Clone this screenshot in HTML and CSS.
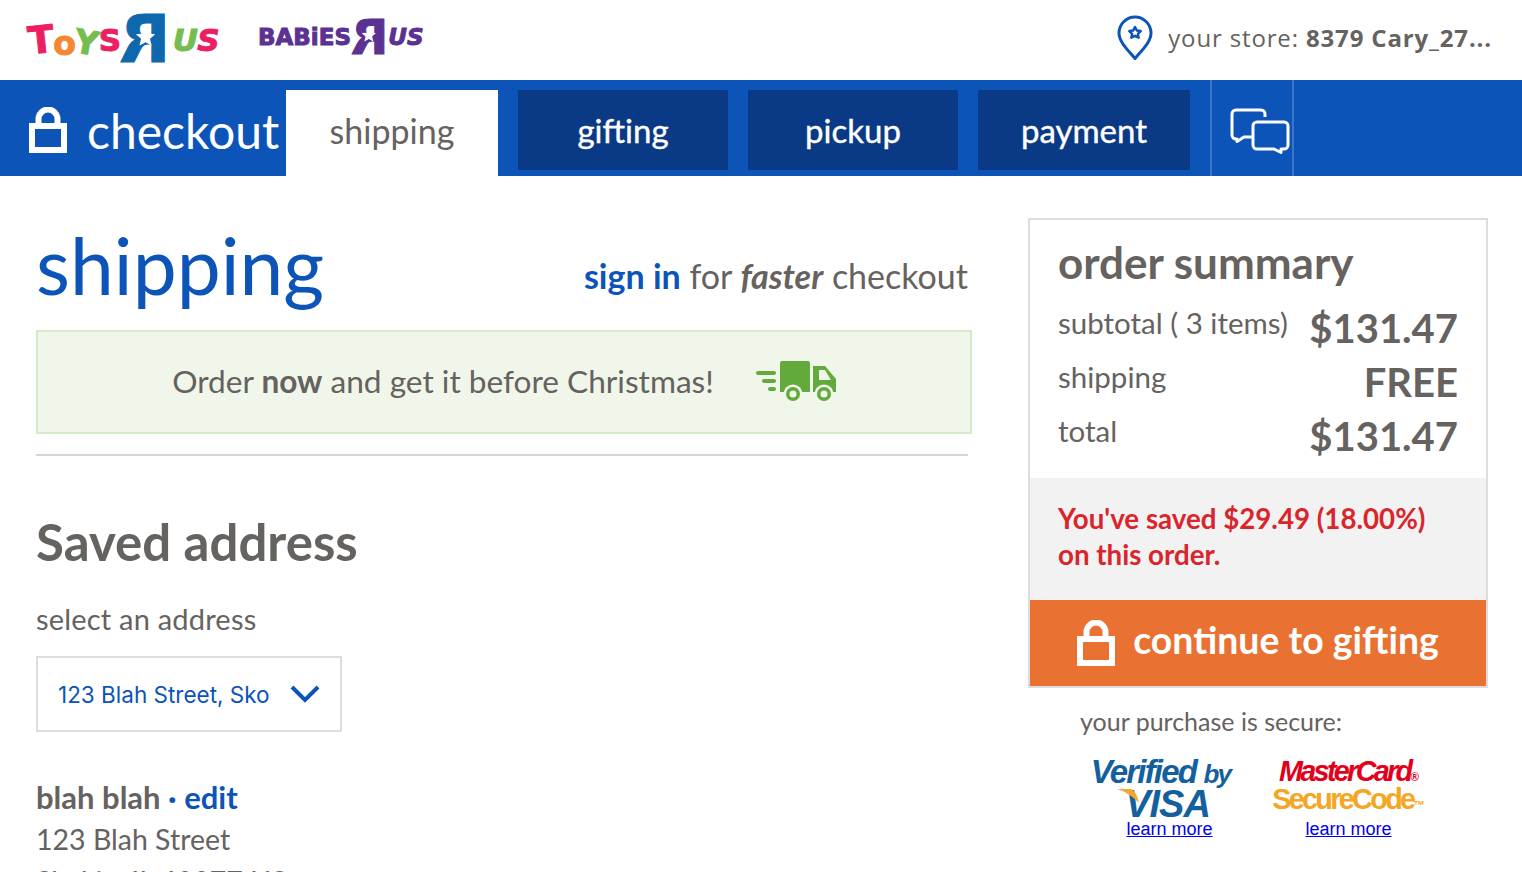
FILE: index.html
```html
<!DOCTYPE html>
<html>
<head>
  <title>Checkout - Toys R Us</title>
  <link rel="stylesheet" href="styles.css">
</head>
<body>
  <header class="topbar">
    <div class="logo logo-toys">
      <span class="l-pink l-t">T</span><span class="l-orange l-o">o</span><span class="l-green l-y">Y</span><span class="l-pink l-s">S</span><span class="big-r"><span class="big-r-letter">R</span><svg class="big-r-star" viewBox="0 0 24 24"><path d="M12 1l3.200 7.200 7.800.7-5.900 5.200 1.800 7.700L12 18l-6.900 3.800 1.800-7.700L1 8.900l7.800-.7z" fill="#fff"/></svg></span><span class="l-green l-italic l-u">U</span><span class="l-pink l-italic l-s">S</span>
    </div>
    <div class="logo logo-babies">
      BABiES<span class="big-r"><span class="big-r-letter">R</span><svg class="big-r-star" viewBox="0 0 24 24"><path d="M12 1l3.200 7.200 7.800.7-5.900 5.200 1.800 7.700L12 18l-6.900 3.800 1.800-7.700L1 8.900l7.800-.7z" fill="#fff"/></svg></span><span class="l-italic">US</span>
    </div>
    <div class="store">
      <svg class="store-pin" width="36" height="46" viewBox="0 0 36 46">
        <path d="M18 43.500C11 35 2 27 2 18a16 16 0 0 1 32 0c0 9-9 17-16 25.500z" fill="none" stroke="#0c54b8" stroke-width="3" stroke-linejoin="round"/>
        <path d="M18 12l1.800 3.500 3.900.6-2.800 2.700.7 3.900-3.600-1.900-3.600 1.900.7-3.900-2.800-2.700 3.900-.6z" fill="none" stroke="#0c54b8" stroke-width="2.500" stroke-linejoin="round"/>
      </svg>
      <span class="store-text">your store: <b>8379 Cary_27...</b></span>
    </div>
  </header>

  <nav class="navbar">
    <div class="nav-title">
      <svg class="lock" width="38" height="46" viewBox="0 0 38 46">
        <path d="M9.500 19V12a9.500 9.500 0 0 1 19 0v7" fill="none" stroke="#fff" stroke-width="6"/>
        <rect x="3" y="19" width="32" height="24" fill="none" stroke="#fff" stroke-width="6"/>
      </svg>
      <span>checkout</span>
    </div>
    <a class="tab tab-active">shipping</a>
    <a class="tab">gifting</a>
    <a class="tab">pickup</a>
    <a class="tab tab-last">payment</a>
    <div class="chat">
      <svg width="60" height="48" viewBox="0 0 60 48">
        <path d="M35 10V7a4 4 0 0 0-4-4H6a4 4 0 0 0-4 4v21a4 4 0 0 0 4 4h1v2.500L14 30h8" fill="none" stroke="#fff" stroke-width="3" stroke-linejoin="round"/>
        <path d="M27 15h27a4 4 0 0 1 4 4v19a4 4 0 0 1-4 4h-3v3.500L44 42H27a4 4 0 0 1-4-4V19a4 4 0 0 1 4-4z" fill="none" stroke="#fff" stroke-width="3" stroke-linejoin="round"/>
      </svg>
    </div>
  </nav>

  <main class="page">
    <section class="left">
      <div class="title-row">
        <h1>shipping</h1>
        <p class="signin"><a>sign in</a> for <b><i>faster</i></b> checkout</p>
      </div>
      <div class="banner">
        <span>Order <b>now</b> and get it before Christmas!</span>
        <svg width="80" height="42" viewBox="0 0 80 42">
          <g fill="#63aa3d">
            <rect y="10" width="20" height="4" rx="2"/>
            <rect x="6" y="18" width="14" height="4" rx="2"/>
            <rect x="12" y="26" width="8" height="4" rx="2"/>
            <path d="M26 0h26a2 2 0 0 1 2 2v29H24V2a2 2 0 0 1 2-2z"/>
            <path d="M57 5h12l11 13v13H57z"/>
          </g>
          <circle cx="37" cy="33" r="9.500" fill="#f0f7ea"/>
          <circle cx="68" cy="33" r="9.500" fill="#f0f7ea"/>
          <circle cx="37" cy="33" r="7" fill="#63aa3d"/>
          <circle cx="68" cy="33" r="7" fill="#63aa3d"/>
          <circle cx="37" cy="33" r="3.500" fill="#f0f7ea"/>
          <circle cx="68" cy="33" r="3.500" fill="#f0f7ea"/>
          <path d="M63 9h6l6 10H63z" fill="#f0f7ea"/>
        </svg>
      </div>
      <hr class="rule">
      <h2>Saved address</h2>
      <p class="field-label">select an address</p>
      <div class="select">
        <span class="select-value">123 Blah Street, Skokie</span>
        <svg width="30" height="20" viewBox="0 0 30 20"><path d="M2 3l13 13L28 3" fill="none" stroke="#0c54b8" stroke-width="4"/></svg>
      </div>
      <p class="addr-name">blah blah <span class="dot">·</span> <a>edit</a></p>
      <p class="addr-line">123 Blah Street</p>
      <p class="addr-line">Skokie, IL 60077 US</p>
    </section>

    <aside class="right">
      <div class="summary">
        <div class="summary-body">
          <h3>order summary</h3>
          <div class="sum-row"><span>subtotal ( 3 items)</span><b>$131.47</b></div>
          <div class="sum-row"><span>shipping</span><b>FREE</b></div>
          <div class="sum-row"><span>total</span><b>$131.47</b></div>
        </div>
        <div class="saved">You've saved $29.49 (18.00%)<br>on this order.</div>
        <a class="continue">
          <svg class="lock" width="38" height="46" viewBox="0 0 38 46">
            <path d="M9.500 19V12a9.500 9.500 0 0 1 19 0v7" fill="none" stroke="#fff" stroke-width="6"/>
            <rect x="3" y="19" width="32" height="24" fill="none" stroke="#fff" stroke-width="6"/>
          </svg>
          <span>continue to gifting</span>
        </a>
      </div>
      <p class="secure">your purchase is secure:</p>
      <div class="badges">
        <div class="badge badge-visa">
          <div class="visa-top">Verified <small>by</small></div>
          <div class="visa-word"><svg class="visa-swoosh" width="22" height="14" viewBox="0 0 22 14"><path d="M0 0h14c4 2 6 6 8 14C16 8 10 3 0 0z" fill="#f3a82c"/></svg>VISA</div>
          <a class="learn">learn more</a>
        </div>
        <div class="badge badge-mc">
          <div class="mc-top">MasterCard<sup>®</sup></div>
          <div class="mc-bottom">SecureCode<sup>™</sup></div>
          <a class="learn">learn more</a>
        </div>
      </div>
    </aside>
  </main>
</body>
</html>
```

FILE: styles.css
```css
html, body {
  height: 872px;
  overflow: hidden;
}

body {
  margin: 0;
  background: #fff;
  color: #65625f;
  font-family: "Lato", "Open Sans", sans-serif;
}

p, h1, h2, h3 {
  margin: 0;
  font-weight: normal;
}

/* top bar */
.topbar {
  display: flex;
  align-items: center;
  height: 80px;
  padding: 0 30px 5px 28px;
  box-sizing: border-box;
}

.logo {
  display: flex;
  align-items: center;
  font-family: "DejaVu Sans", sans-serif;
  font-weight: 700;
  white-space: nowrap;
  -webkit-text-stroke: 1px currentColor;
}

.logo-toys {
  width: 230px;
  margin-top: 5px;
  font-size: 33px;
  letter-spacing: -0.6px;
}

.logo-babies {
  color: #5b3192;
  font-size: 23px;
  letter-spacing: 0;
}

.l-pink { color: #ec1f63; }
.l-orange { color: #f58632; }
.l-green { color: #75bd4f; }
.l-italic { font-style: italic; }

.l-t { display: inline-block; font-size: 38px; transform: rotate(-6deg); }
.l-o { display: inline-block; transform: translateY(3px); }
.l-y { display: inline-block; transform: rotate(10deg) translateY(2px); }
.l-s { display: inline-block; font-size: 31px; }
.l-u { display: inline-block; font-size: 31px; margin-left: 2px; }

.big-r {
  position: relative;
  display: inline-block;
  line-height: 1;
  color: #0d68ae;
}

.big-r-letter {
  display: inline-block;
  transform: scaleX(-1);
  font-size: 2em;
}

.logo-babies .big-r {
  color: #5b3192;
}

.logo-babies .big-r-letter {
  font-size: 2.100em;
}

.big-r-star {
  position: absolute;
  top: 24%;
  left: 28%;
  width: 42%;
  height: 42%;
}

.store {
  display: flex;
  align-items: center;
  margin-left: auto;
}

.store-pin {
  margin-right: 15px;
}

.store-text {
  font-family: "Open Sans", sans-serif;
  font-size: 24px;
  letter-spacing: 0.85px;
}

/* blue nav */
.navbar {
  display: flex;
  height: 96px;
  background: #0c54b8;
}

.nav-title {
  display: flex;
  align-items: center;
  width: 286px;
  box-sizing: border-box;
  padding: 4px 0 0 29px;
  gap: 20px;
  color: #fff;
  font-size: 48px;
  white-space: nowrap;
}

.tab {
  display: flex;
  align-items: center;
  justify-content: center;
  width: 210px;
  height: 80px;
  margin: 10px 20px 0 0;
  background: #0a3a85;
  color: #fff;
  font-size: 33px;
  -webkit-text-stroke: 0.4px currentColor;
}

.tab-active {
  width: 212px;
  height: 80px;
  padding-bottom: 6px;
  background: #fff;
  color: #65625f;
  font-size: 34px;
  -webkit-text-stroke: 0;
}

.tab-last {
  width: 212px;
}

.chat {
  display: flex;
  align-items: center;
  width: 84px;
  height: 96px;
  padding: 6px 0 0 18px;
  box-sizing: border-box;
  border-left: 2px solid #3d76c6;
  border-right: 2px solid #3d76c6;
}

/* page */
.page {
  display: flex;
  align-items: flex-start;
  padding: 42px 34px 0 36px;
}

.left {
  width: 936px;
}

.title-row {
  display: flex;
  justify-content: space-between;
  align-items: flex-start;
  height: 112px;
  padding-right: 4px;
}

h1 {
  color: #0c54b8;
  font-size: 78.500px;
  line-height: 94px;
}

.signin {
  margin-top: 38px;
  font-size: 34px;
  line-height: 40px;
}

.signin a {
  color: #0c54b8;
  font-weight: 700;
}

.banner {
  display: flex;
  align-items: center;
  justify-content: center;
  gap: 42px;
  height: 104px;
  box-sizing: border-box;
  background: #f0f7ea;
  border: 2px solid #d6e9c8;
  font-size: 31.600px;
}

.banner span {
  margin-top: -3px;
}

.rule {
  width: 932px;
  margin: 20px 0 0;
  border: 0;
  border-top: 2px solid #d5d5d5;
}

h2 {
  margin-top: 56px;
  font-size: 51px;
  font-weight: 700;
  line-height: 60px;
}

.field-label {
  margin-top: 29px;
  font-size: 29px;
  letter-spacing: 0.2px;
  line-height: 36px;
}

.select {
  display: flex;
  align-items: center;
  width: 306px;
  height: 76px;
  margin-top: 19px;
  padding: 0 20px;
  box-sizing: border-box;
  border: 2px solid #ddd;
  color: #0c54b8;
  font-family: "Inter", sans-serif;
  font-size: 22.500px;
}

.select-value {
  width: 212px;
  margin-right: 20px;
  overflow: hidden;
  white-space: nowrap;
}

.addr-name {
  margin-top: 45px;
  font-size: 31px;
  font-weight: 700;
  line-height: 40px;
}

.addr-name a, .dot {
  color: #0c54b8;
}

.addr-line {
  margin-top: 2px;
  font-size: 28.500px;
  line-height: 40px;
}

/* order summary */
.right {
  width: 460px;
  margin-left: 56px;
}

.summary {
  border: 2px solid #ddd;
}

.summary-body {
  height: 258px;
  padding: 16px 28px 0;
  box-sizing: border-box;
}

h3 {
  font-size: 44px;
  font-weight: 700;
  line-height: 52px;
  margin-bottom: 13px;
}

.sum-row {
  display: flex;
  justify-content: space-between;
  align-items: center;
  height: 54px;
  font-size: 29.500px;
}

.sum-row span {
  margin-top: -11px;
}

.sum-row b {
  font-size: 40px;
}

.saved {
  height: 122px;
  padding: 23px 28px 0;
  box-sizing: border-box;
  background: #f2f2f2;
  color: #d9252b;
  font-size: 27.700px;
  font-weight: 700;
  line-height: 36px;
  white-space: nowrap;
}

.continue {
  display: flex;
  align-items: center;
  justify-content: center;
  gap: 18px;
  height: 86px;
  background: #e97132;
  color: #fff;
  font-size: 37.400px;
  font-weight: 700;
}

.continue span {
  margin-top: -7px;
}

.secure {
  margin: 17px 0 0 52px;
  font-size: 25px;
  line-height: 32px;
}

.badges {
  display: flex;
  margin-top: 19px;
  padding-left: 52px;
}

.badge {
  width: 179px;
  display: flex;
  flex-direction: column;
  align-items: center;
  font-family: "Liberation Sans", sans-serif;
  font-weight: 700;
  font-style: italic;
  white-space: nowrap;
}

.visa-top {
  height: 33px;
  margin-right: 18px;
  color: #14609f;
  font-size: 33px;
  line-height: 32px;
  letter-spacing: -1.8px;
}

.visa-top small {
  font-size: 26px;
}

.visa-word {
  position: relative;
  height: 30px;
  margin-right: 4px;
  color: #14609f;
  font-size: 38px;
  font-weight: 700;
  line-height: 30px;
  letter-spacing: -1px;
}

.visa-swoosh {
  position: absolute;
  top: 0;
  left: -8px;
}

.mc-top, .mc-bottom {
  font-size: 30px;
  line-height: 30px;
  letter-spacing: -2.800px;
  transform: scaleX(0.96);
}

.mc-top { height: 28px; color: #e2001a; }
.mc-bottom { height: 35px; color: #f5a623; font-style: normal; }

.badge sup {
  font-size: 12px;
  font-style: normal;
  letter-spacing: 0;
  vertical-align: baseline;
}

.learn {
  margin-top: -1px;
  color: #0000ee;
  font-size: 18px;
  font-style: normal;
  font-weight: normal;
  line-height: 22px;
  text-decoration: underline;
}
```
